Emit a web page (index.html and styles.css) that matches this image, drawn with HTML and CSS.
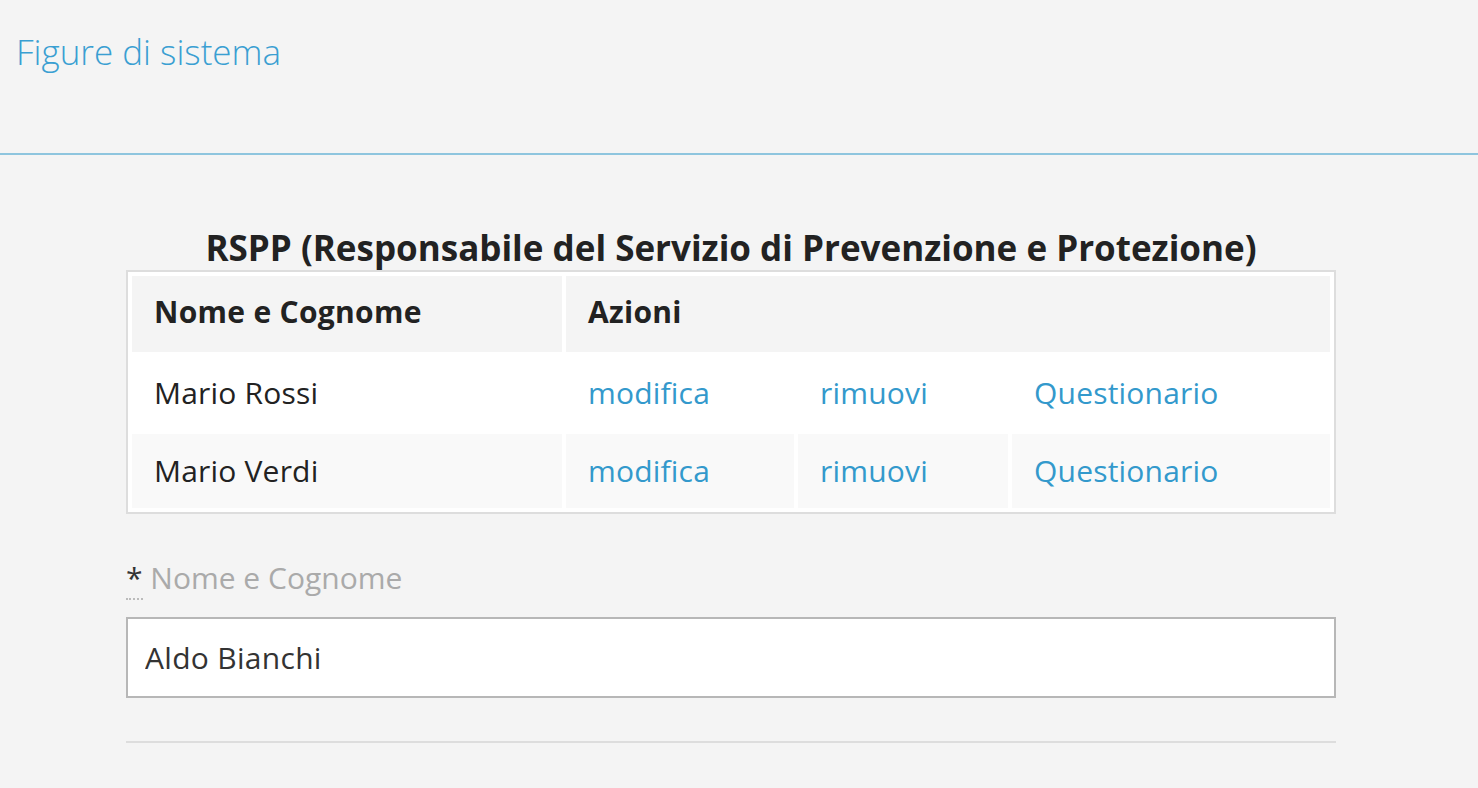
FILE: index.html
```html
<!DOCTYPE html>
<html lang="it">
<head>
<meta charset="utf-8">
<title>Figure di sistema</title>
<link rel="stylesheet" href="styles.css">
</head>
<body>
<header class="page-header">
  <h1 class="page-title">Figure di sistema</h1>
</header>
<main class="content">
  <h2 class="section-title">RSPP (Responsabile del Servizio di Prevenzione e Protezione)</h2>
  <table class="people">
    <colgroup>
      <col class="c-name">
      <col class="c-a1">
      <col class="c-a2">
      <col class="c-a3">
    </colgroup>
    <thead>
      <tr>
        <th>Nome e Cognome</th>
        <th colspan="3">Azioni</th>
      </tr>
    </thead>
    <tbody>
      <tr class="odd">
        <td>Mario Rossi</td>
        <td><a href="#">modifica</a></td>
        <td><a href="#">rimuovi</a></td>
        <td><a href="#">Questionario</a></td>
      </tr>
      <tr class="even">
        <td>Mario Verdi</td>
        <td><a href="#">modifica</a></td>
        <td><a href="#">rimuovi</a></td>
        <td><a href="#">Questionario</a></td>
      </tr>
    </tbody>
  </table>
  <div class="field">
    <label class="field-label" for="nome"><abbr class="req" title="obbligatorio">*</abbr> Nome e Cognome</label>
    <input class="field-input" id="nome" type="text" value="Aldo Bianchi">
  </div>
  <hr class="divider">
</main>
</body>
</html>
```
FILE: styles.css
```css
html, body {
  margin: 0;
  padding: 0;
  background: #f4f4f4;
  font-family: "Open Sans", "Liberation Sans", sans-serif;
  color: #222;
}

.page-header {
  height: 153px;
  border-bottom: 2px solid #8ec5de;
  box-sizing: content-box;
}

.page-title {
  margin: 0;
  padding: 28px 0 0 16px;
  font-size: 35px;
  font-weight: 300;
  line-height: 48px;
  color: #3a9fd2;
}

.content {
  width: 1210px;
  margin-left: 126px;
  padding-top: 70px;
}

.section-title {
  margin: 0;
  text-align: center;
  font-size: 35px;
  font-weight: 700;
  line-height: 45px;
  color: #222;
}

.people {
  width: 1210px;
  table-layout: fixed;
  border: 2px solid #dddddd;
  border-spacing: 4px;
  background: #ffffff;
  font-size: 30px;
  line-height: 40px;
}

.c-name { width: 430px; }
.c-a1 { width: 228px; }
.c-a2 { width: 210px; }
.c-a3 { width: 318px; }

.people th {
  text-align: left;
  font-weight: 700;
  background: #f4f4f4;
  height: 72px;
  padding: 0 22px 4px;
  color: #222;
  letter-spacing: 0.3px;
}

.people td {
  height: 74px;
  padding: 0 22px;
  color: #222;
  letter-spacing: 0.2px;
}

.people tr.even td {
  background: #f9f9f9;
}

.people a {
  color: #3399cc;
  text-decoration: none;
}

.field {
  margin-top: 45px;
}

.field-label {
  display: block;
  font-size: 30px;
  color: #aaaaaa;
  line-height: 38px;
}

.req {
  color: #333;
  text-decoration: none;
  border-bottom: 2px dotted #bbb;
}

.field-input {
  display: block;
  box-sizing: border-box;
  width: 1210px;
  height: 81px;
  margin-top: 20px;
  padding: 0 17px;
  border: 2px solid #b7b7b7;
  background: #fff;
  font-family: "Open Sans", "Liberation Sans", sans-serif;
  font-size: 30px;
  letter-spacing: 0.3px;
  color: #333;
  outline: none;
}

.divider {
  margin: 43px 0 0 0;
  border: 0;
  border-top: 2px solid #dddddd;
  height: 0;
}
```
